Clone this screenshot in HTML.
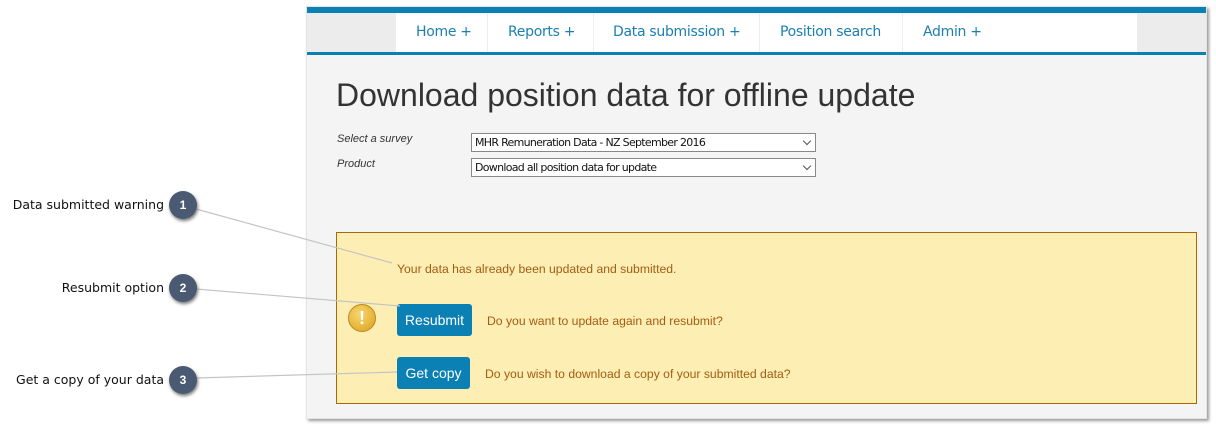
<!DOCTYPE html>
<html><head><style>
body{margin:0;width:1216px;height:428px;background:#fff;position:relative;overflow:hidden;font-family:"Liberation Sans",sans-serif}
.abs{position:absolute}
.frame{left:306px;top:6px;width:901px;height:413px;background:#f4f4f4;box-shadow:2px 2px 3px #999;border:1px solid #e4e4e4;box-sizing:border-box}
.nav a{position:absolute;top:24px;font-family:"DejaVu Sans",sans-serif;font-size:14px;letter-spacing:-0.3px;color:#1b7fb1;white-space:nowrap}
.lbl{font-style:italic;font-size:11px;color:#333}
.sel{left:471px;width:345px;height:19px;border:1px solid #888;background:#fff;box-sizing:border-box;font-family:"DejaVu Sans",sans-serif;font-size:11px;line-height:17px;padding-left:3px;color:#111;letter-spacing:-0.7px}
.sel:after{content:"";position:absolute;right:5px;top:4px;width:5px;height:5px;border-right:1px solid #555;border-bottom:1px solid #555;transform:rotate(45deg)}
.btn{background:#0a80b5;color:#fff;font-size:14px;border-radius:3px;text-align:center;line-height:32px;height:32px}
.y{color:#a45c12;font-size:12.2px}
.c{width:28px;height:28px;border-radius:50%;background:#4a5a72;color:#fff;font-size:12px;font-weight:bold;text-align:center;line-height:28px;box-shadow:1px 2px 3px #777}
.cl{font-family:"DejaVu Sans",sans-serif;font-size:12.5px;color:#111;text-align:right;width:200px;left:-36px}
</style></head><body>
<div class="abs frame"></div>
<div class="abs" style="left:307px;top:7px;width:899px;height:6px;background:#0a80b5"></div>
<div class="abs" style="left:307px;top:13px;width:89px;height:39px;background:#ececec"></div>
<div class="abs" style="left:1137px;top:13px;width:69px;height:39px;background:#ececec"></div>
<div class="abs" style="left:396px;top:13px;width:741px;height:39px;background:#fff"></div>
<div class="abs" style="left:307px;top:52px;width:899px;height:3px;background:#0a80b5"></div>
<div class="abs" style="left:487px;top:13px;width:1px;height:39px;background:#eee"></div>
<div class="abs" style="left:593px;top:13px;width:1px;height:39px;background:#eee"></div>
<div class="abs" style="left:759px;top:13px;width:1px;height:39px;background:#eee"></div>
<div class="abs" style="left:902px;top:13px;width:1px;height:39px;background:#eee"></div>
<div class="nav"><a style="left:416px">Home +</a><a style="left:508px">Reports +</a><a style="left:613px">Data submission +</a><a style="left:780px">Position search</a><a style="left:923px">Admin +</a></div>
<div class="abs" style="left:336px;top:77px;font-size:32px;color:#333;white-space:nowrap">Download position data for offline update</div>
<div class="abs lbl" style="left:337px;top:133px">Select a survey</div>
<div class="abs lbl" style="left:337px;top:158px">Product</div>
<div class="abs sel" style="top:133px">MHR Remuneration Data - NZ September 2016</div>
<div class="abs sel" style="top:158px">Download all position data for update</div>
<div class="abs" style="left:336px;top:232px;width:861px;height:172px;background:#fdeeb3;border:1px solid #a86a00;box-sizing:border-box"></div>
<div class="abs y" style="left:397px;top:262px">Your data has already been updated and submitted.</div>
<div class="abs" style="left:348px;top:304px;width:28px;height:28px;border-radius:50%;background:radial-gradient(circle at 40% 35%,#f8d670,#dca01c);border:1px solid #b88a20;box-sizing:border-box;color:#fff;font-weight:bold;font-size:18px;text-align:center;line-height:26px">!</div>
<div class="abs btn" style="left:397px;top:304px;width:75px">Resubmit</div>
<div class="abs y" style="left:487px;top:314px">Do you want to update again and resubmit?</div>
<div class="abs btn" style="left:397px;top:357px;width:73px">Get copy</div>
<div class="abs y" style="left:485px;top:367px">Do you wish to download a copy of your submitted data?</div>
<svg class="abs" style="left:0;top:0" width="1216" height="428"><g stroke="#c4c4c4" stroke-width="1.2"><line x1="196" y1="209" x2="392" y2="263"/><line x1="196" y1="289" x2="400" y2="306"/><line x1="196" y1="378" x2="397" y2="372"/></g></svg>
<div class="abs cl" style="top:197px">Data submitted warning</div>
<div class="abs cl" style="top:280px">Resubmit option</div>
<div class="abs cl" style="top:372px">Get a copy of your data</div>
<div class="abs c" style="left:169px;top:191px">1</div>
<div class="abs c" style="left:169px;top:274px">2</div>
<div class="abs c" style="left:169px;top:366px">3</div>
</body></html>
